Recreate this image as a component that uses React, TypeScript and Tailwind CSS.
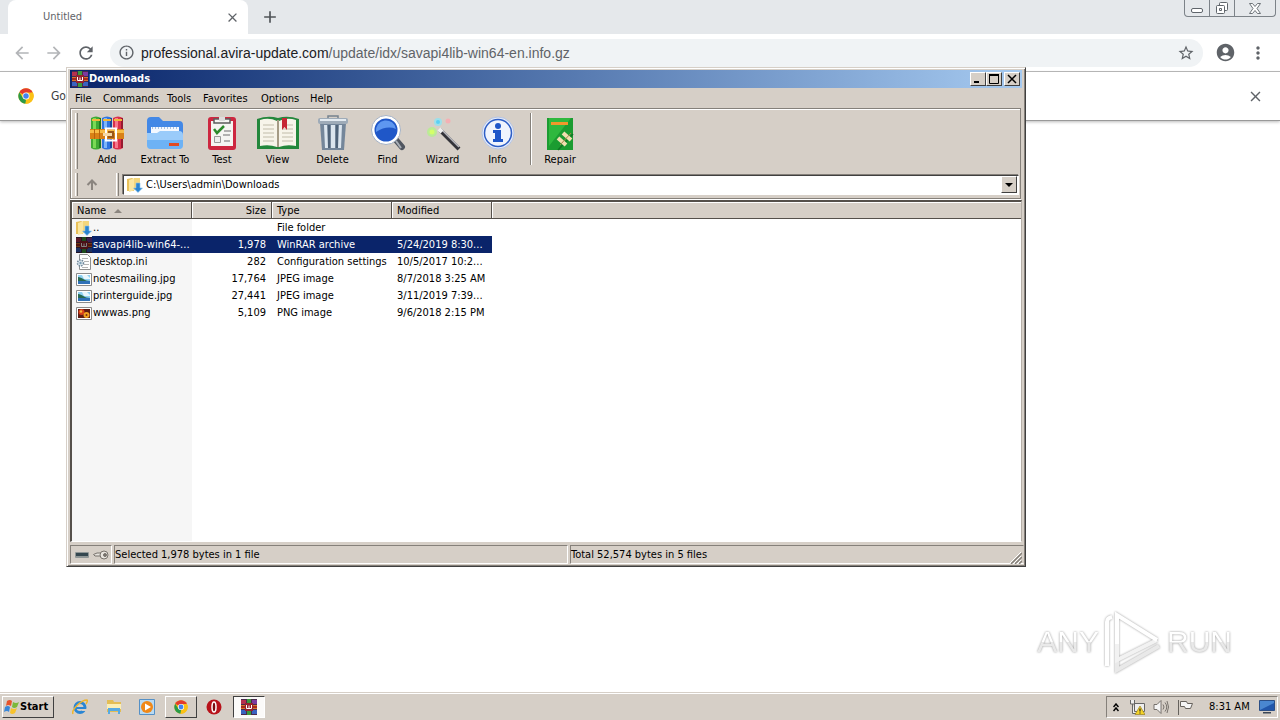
import type { ReactNode } from 'react';
import {
  MdAccountCircle, MdAdd, MdArrowBack, MdArrowForward, MdClose, MdInfoOutline, MdMoreVert, MdRefresh, MdStarBorder,
} from 'react-icons/md';

function RarIcon({ className = 'size-4' }: { className?: string }) {
  return (
    <svg viewBox="0 0 16 16" className={className} aria-hidden="true">
      <rect width="16" height="16" fill="#4a2a4c" />
      <path fill="#b5304e" d="M0 1h5v4H0z" /><path fill="#3c9a3c" d="M6 0h4v5H6z" /><path fill="#7c3a9e" d="M11 1h5v4h-5z" />
      <path fill="#3a62c0" d="M0 11h5v4H0z" /><path fill="#3c9a3c" d="M6 11h4v5H6z" /><path fill="#3a62c0" d="M11 11h5v4h-5z" />
      <path fill="#a8281e" d="M0 6h16v4H0z" /><path fill="#d7762c" d="M0 6h16v1H0zM0 9h16v1H0z" />
      <path fill="#96222e" d="M4 4h8v8H4z" />
      <path d="M5.500 6v3.500h5V6M8 6.500v3" stroke="#fff" fill="none" />
    </svg>
  );
}

function FolderIcon() {
  return (
    <svg viewBox="0 0 16 16" className="size-4 shrink-0" aria-hidden="true">
      <path fill="#e9c15a" d="M0 2l5-1 2 1v12H0z" /><path fill="#fae6a0" d="M2 3l6-2v12l-6 2z" />
      <path fill="#f3d67c" d="M7 1h6v12H7z" />
      <path fill="#2a84cf" stroke="#8cc4ee" strokeWidth=".6" d="M9 6h4v5h2.500L11 15.500 6.500 11H9z" />
    </svg>
  );
}

function IniIcon() {
  return (
    <svg viewBox="0 0 16 16" className="size-4 shrink-0" aria-hidden="true">
      <path fill="#fff" stroke="#8e8e8e" d="M3.500.5h8l3 3v12h-11z" /><path stroke="#b5b5b5" d="M6 4.500h6M8 7.500h5M8 10.500h5M6 13.500h6" />
      <circle cx="4.500" cy="9" r="3" fill="#dfe8ee" stroke="#70889a" strokeWidth="1.500" strokeDasharray="1.500 1" />
      <circle cx="4.500" cy="9" r="1.200" fill="#7da0b6" />
    </svg>
  );
}

function JpgIcon() {
  return (
    <svg viewBox="0 0 16 16" className="size-4 shrink-0" aria-hidden="true">
      <path fill="#fff" stroke="#8a8a8a" d="M.5 2.500h15v12H.5z" /><path fill="#8fd0f2" d="M2 4h12v9H2z" />
      <path fill="#e9f6fc" d="M6 4h5l3 3v1H8z" /><path fill="#27694f" d="M2 6c4 0 6 4 12 4v1H2z" /><path fill="#2f71b8" d="M2 10h12v3H2z" />
    </svg>
  );
}

function PngIcon() {
  return (
    <svg viewBox="0 0 16 16" className="size-4 shrink-0" aria-hidden="true">
      <path fill="#fff" stroke="#8a8a8a" d="M.5 2.500h15v12H.5z" /><path fill="#5e1b12" d="M2 4h12v9H2z" />
      <circle cx="5.500" cy="7" r="3" fill="#d9401b" /><circle cx="10.500" cy="10" r="3" fill="#f0a321" /><circle cx="5" cy="6.500" r="1.200" fill="#f6bc3a" />
      <circle cx="10.500" cy="10" r="1" fill="#7a2a12" />
    </svg>
  );
}

function ChromeIcon({ className = 'size-4' }: { className?: string }) {
  return (
    <svg viewBox="0 0 48 48" className={className} aria-hidden="true">
      <circle cx="24" cy="24" r="23" fill="#fbc116" />
      <path fill="#e33b2e" d="M24 24 4.100 12.500a23 23 0 0 1 39.800 0z" />
      <path fill="#2a9a48" d="M4.100 12.500 14.500 29.500 24 35l-2 12A23 23 0 0 1 4.100 12.500z" />
      <path fill="#fbc116" d="M24 13.500h20.500A23 23 0 0 1 22.500 47L33 29z" />
      <circle cx="24" cy="24" r="10.500" fill="#fff" /><circle cx="24" cy="24" r="8.300" fill="#4384f0" />
    </svg>
  );
}

function AddIcon() {
  const books = [[2, '#3faa35', '#7ada56', '#1f7a20'], [13, '#2f74e0', '#7db5fa', '#1a489e'], [24, '#d9304a', '#f7788c', '#981a30']] as const;
  return (
    <svg viewBox="0 0 36 36" className="size-9" aria-hidden="true">
      {books.map(([x, main, light, dark]) => (
        <g key={x}>
          <path fill={main} d={`M${x} 3q5-3 10 0v30q-5 3-10 0z`} />
          <path fill={light} d={`M${x + 2} 3h3v30h-3z`} /><path fill={dark} d={`M${x + 8} 3h2v30h-2z`} />
          <path fill="#f3b63a" d={`M${x + 1} 4h8v2h-8z`} />
        </g>
      ))}
      <path fill="#d98116" d="M1 14h34v10H1z" /><path fill="#f7bc46" d="M1 15h34v3H1z" />
      <path fill="#b5640e" d="M5 14h1v10H5zM10 14h1v10h-1z" />
      <path fill="none" stroke="#fff" strokeWidth="2" d="M17 13.500h10v12H17z" /><path fill="#9c5717" d="M19 16h6v7h-6z" />
      <path fill="#f4d9a8" d="M14 18h9v3h-9z" />
    </svg>
  );
}

function ExtractIcon() {
  return (
    <svg viewBox="0 0 38 36" className="h-9 w-[38px]" aria-hidden="true">
      <path fill="#4388e6" d="M1 6q0-4 4-4h8l4 4h16q4 0 4 4v18H1z" />
      <path fill="#f4f8ff" d="M5 12h28v10H5z" /><path stroke="#a8c0e0" strokeDasharray="1 2" strokeWidth="2" d="M6 13h26" />
      <path fill="#9acbfa" d="M1 18h10l3-2h19q4 0 4 4v10q0 4-4 4H5q-4 0-4-4z" /><path fill="#6db2f5" d="M1 25h36v5q0 4-4 4H5q-4 0-4-4z" />
      <path fill="#e04a22" d="M23 28h10v3H23z" />
    </svg>
  );
}

function TestIcon() {
  return (
    <svg viewBox="0 0 30 36" className="h-9 w-[30px]" aria-hidden="true">
      <rect x="1" y="2" width="28" height="33" rx="3" fill="#cd2740" /><path fill="#f5f5f2" d="M4 6h22v25H4z" />
      <path fill="#f5f5f2" stroke="#5c5c5c" strokeWidth="1.500" d="M7 4h16v4H7z" /><path fill="#ddd" d="M12 2h6v4h-6z" />
      <path fill="none" stroke="#2c8a2c" strokeWidth="2.500" d="m7 14 3 4 7-7" /><path stroke="#9a9a9a" strokeWidth="1.500" d="M17 16h7M16 20h7M17 26h6" />
      <path fill="#eee" stroke="#999" d="M7.500 21.500h6v6h-6z" />
    </svg>
  );
}

function ViewIcon() {
  return (
    <svg viewBox="0 0 42 36" className="h-9 w-[42px]" aria-hidden="true">
      <path fill="#23873c" d="M0 4q11-4 21-1 10-3 21 1v30H0z" /><path fill="#f7f4ea" d="M3 5q9-3 17 1v26q-8-3-17-1zM39 5q-9-3-17 1v26q8-3 17-1z" />
      <path stroke="#c2bba9" strokeWidth="1.200" d="M6 10h11M6 14h11M6 18h11M6 22h11M6 26h11M25 10h11M25 14h11M25 18h11M25 22h11M25 26h11" />
      <path stroke="#a59b86" strokeWidth="2" d="M21 5v27" /><path fill="#c62634" d="M25 3h5v12l-2.500-3-2.500 3z" />
    </svg>
  );
}

function DeleteIcon() {
  return (
    <svg viewBox="0 0 32 36" className="h-9 w-8" aria-hidden="true">
      <path fill="#74869a" d="M3 8h26l-2 27H5z" /><path fill="#dbe5ee" d="M7 10h3l1 23H8zM14 10h4v23h-4zM22 10h3l-1 23h-3z" />
      <path fill="#4e6278" d="M11 10h2v23h-2zM19 10h2v23h-2z" /><rect x="1" y="3" width="30" height="6" rx="2" fill="#9eabb8" /><path fill="#e4ebf1" d="M3 4h26v2H3z" />
      <path fill="none" stroke="#75828e" strokeWidth="1.500" d="M11 3V1h10v2" />
    </svg>
  );
}

function FindIcon() {
  return (
    <svg viewBox="0 0 36 36" className="size-9" aria-hidden="true">
      <path stroke="#505660" strokeWidth="6" strokeLinecap="round" d="m26 25 6 7" /><path stroke="#aab0b8" strokeWidth="2" d="m26 26 5 7" />
      <circle cx="16" cy="15" r="13" fill="#1f57c8" stroke="#fff" strokeWidth="3" /><circle cx="16" cy="15" r="14.500" fill="none" stroke="#a4b2c6" />
      <path fill="#5e97f0" d="M6 17a10 10 0 0 1 20-3q-9-4-20 3z" />
    </svg>
  );
}

function WizardIcon() {
  return (
    <svg viewBox="0 0 36 36" className="size-9" aria-hidden="true">
      <path stroke="#34343a" strokeWidth="4" d="m15 15 19 19" /><path stroke="#b9b9bf" strokeWidth="1.500" d="m16 14 18 18" />
      <path stroke="#eee" strokeWidth="4" d="m14 14 3 3" />
      <circle cx="7" cy="17" r="5" fill="#b4f08c" opacity=".8" /><circle cx="7" cy="17" r="2.500" fill="#d4ff6a" />
      <circle cx="13" cy="7" r="4" fill="#8fe4f4" opacity=".8" /><circle cx="13" cy="7" r="2" fill="#5ad0f5" />
      <circle cx="23" cy="6" r="2.500" fill="#f4b0b4" />
    </svg>
  );
}

function InfoIcon() {
  return (
    <svg viewBox="0 0 36 36" className="size-9" aria-hidden="true">
      <circle cx="18" cy="18" r="16" fill="#e6ecfa" stroke="#b4c4e4" /><circle cx="18" cy="18" r="13.500" fill="#f0f4fd" stroke="#2d5ec6" strokeWidth="1.500" />
      <circle cx="18" cy="11" r="3" fill="#1e56c8" /><path fill="#1e56c8" d="M13 15h8v9h2v3H13v-3h2v-6h-2z" />
    </svg>
  );
}

function RepairIcon() {
  return (
    <svg viewBox="0 0 30 36" className="h-9 w-[30px]" aria-hidden="true">
      <path fill="#1b9c31" d="M2 3h26v32H2z" /><path fill="#2fb83e" d="M4 3h22L4 31z" /><path fill="#f0982b" d="M6 7h17v3H6z" />
      <path stroke="#107524" strokeWidth="1.500" d="m13 35 15-16" />
      <path stroke="#f1dfb0" strokeWidth="4" d="m13 23 8 7M18 18l8 7" /><path stroke="#a4854c" d="m15 30 11-12" />
    </svg>
  );
}

const menus = [['File', 'w-7'], ['Commands', 'w-16'], ['Tools', 'w-9'], ['Favorites', 'w-[58px]'], ['Options', 'w-[49px]'], ['Help', 'w-8']];

const tools: { label: string; width: string; icon: ReactNode }[] = [
  { label: 'Add', width: 'w-[58px]', icon: <AddIcon /> },
  { label: 'Extract To', width: 'w-[58px]', icon: <ExtractIcon /> },
  { label: 'Test', width: 'w-14', icon: <TestIcon /> },
  { label: 'View', width: 'w-[55px]', icon: <ViewIcon /> },
  { label: 'Delete', width: 'w-[55px]', icon: <DeleteIcon /> },
  { label: 'Find', width: 'w-[55px]', icon: <FindIcon /> },
  { label: 'Wizard', width: 'w-[55px]', icon: <WizardIcon /> },
  { label: 'Info', width: 'w-[55px]', icon: <InfoIcon /> },
];

const files: { name: string; size: string; type: string; date: string; icon: ReactNode; selected?: boolean }[] = [
  { name: '..', size: '', type: 'File folder', date: '', icon: <FolderIcon /> },
  { name: 'savapi4lib-win64-...', size: '1,978', type: 'WinRAR archive', date: '5/24/2019 8:30...', icon: <RarIcon className="size-4 shrink-0 brightness-50" />, selected: true },
  { name: 'desktop.ini', size: '282', type: 'Configuration settings', date: '10/5/2017 10:2...', icon: <IniIcon /> },
  { name: 'notesmailing.jpg', size: '17,764', type: 'JPEG image', date: '8/7/2018 3:25 AM', icon: <JpgIcon /> },
  { name: 'printerguide.jpg', size: '27,441', type: 'JPEG image', date: '3/11/2019 7:39...', icon: <JpgIcon /> },
  { name: 'wwwas.png', size: '5,109', type: 'PNG image', date: '9/6/2018 2:15 PM', icon: <PngIcon /> },
];

const raised = 'border border-t-white border-l-white border-b-[#404040] border-r-[#404040] bg-[#d6cfc7]';

function ToolButton({ label, width, icon }: { label: string; width: string; icon: ReactNode }) {
  return (
    <button className={`flex flex-col items-center ${width}`}>
      {icon}
      <span className="mt-px leading-4 whitespace-nowrap">{label}</span>
    </button>
  );
}

function Grip() {
  return <span className="w-[3px] self-stretch border-r border-l border-r-[#85807a] border-l-white" />;
}

function CaptionButton({ label, children }: { label: string; children: ReactNode }) {
  return (
    <button aria-label={label} className={`flex h-[14px] w-4 items-center justify-center ${raised}`}>
      <svg viewBox="0 0 12 12" className="size-3 shrink-0" fill="none" stroke="#000">{children}</svg>
    </button>
  );
}

function ArchiveWindow() {
  const head = 'h-[17px] border-r border-b border-[#55504b] p-0 pt-px leading-[15px] font-normal shadow-[inset_1px_1px_0_#fff]';
  return (
    <section aria-label="Downloads" className="absolute top-[67px] left-[66px] flex h-[500px] w-[960px] flex-col border border-t-[#d6cfc7] border-r-[#404040] border-b-[#404040] border-l-[#d6cfc7] bg-[#d6cfc7] p-0.5 text-[11px] text-black shadow-[inset_1px_1px_0_#fff,inset_-1px_-1px_0_#85807a]">
      <header className="mx-px flex h-[18px] shrink-0 items-center bg-linear-to-r from-[#0a246a] to-[#a6caf0] px-0.5">
        <RarIcon />
        <h1 className="ml-px flex-1 pt-px font-bold text-white">Downloads</h1>
        <CaptionButton label="Minimize"><path d="M2 9h5" strokeWidth="2" /></CaptionButton>
        <CaptionButton label="Maximize"><path d="M1.500 2v8.500h9V2" /><path d="M1 2h10" strokeWidth="2" /></CaptionButton>
        <span className="w-0.5" />
        <CaptionButton label="Close"><path d="m2 2 8 8M10 2l-8 8" strokeWidth="1.500" /></CaptionButton>
      </header>

      <nav className="flex h-5 shrink-0 items-center pt-0.5 pl-1.5">
        {menus.map(([label, width]) => <button key={label} className={`text-left ${width}`}>{label}</button>)}
      </nav>

      <div className="mr-0.5 ml-px flex h-[91px] shrink-0 flex-col border border-[#85807a] shadow-[inset_1px_1px_0_#fff,0_1px_0_#fff]">
        <div className="flex h-16 py-1 pl-1">
          <Grip />
          <div className="flex h-14 items-start pt-0.5">
            {tools.map((t) => <ToolButton key={t.label} {...t} />)}
          </div>
          <span className="ml-[5px] h-[52px] w-0.5 border-r border-l border-r-white border-l-[#85807a]" />
          <div className="pt-0.5">
            <ToolButton label="Repair" width="w-14" icon={<RepairIcon />} />
          </div>
        </div>
        <div className="flex h-[23px] items-center pl-1">
          <Grip />
          <button aria-label="Up one level" className="flex w-7 justify-center">
            <svg viewBox="0 0 12 12" className="size-3" fill="none" stroke="#8b857f" strokeWidth="2"><path d="M6 11V2M1.500 6 6 1.500 10.500 6" /></svg>
          </button>
          <span className="w-2.5" />
          <Grip />
          <div className="mr-px ml-1 flex h-5 flex-1 items-center border border-t-[#404040] border-r-white border-b-white border-l-[#404040] bg-white pl-[3px] shadow-[-1px_-1px_0_#85807a]">
            <FolderIcon />
            <input aria-label="Path" defaultValue="C:\Users\admin\Downloads" className="ml-[3px] min-w-0 flex-1 pt-px outline-none" />
            <button aria-label="Show recent folders" className={`mr-px flex h-[17px] w-4 items-center justify-center ${raised}`}>
              <svg viewBox="0 0 8 4" className="h-1 w-2"><path d="M0 0h8L4 4z" /></svg>
            </button>
          </div>
        </div>
      </div>

      <div className="mx-px mt-px flex-1 overflow-hidden border-t-2 border-r border-b border-l-2 border-t-[#55504b] border-r-[#b5afa8] border-b-white border-l-[#55504b] bg-[linear-gradient(to_right,#f6f6f6_120px,#fff_120px)]">
        <table className="w-full table-fixed border-separate border-spacing-0">
          <colgroup><col className="w-[120px]" /><col className="w-20" /><col className="w-[120px]" /><col className="w-[100px]" /><col /></colgroup>
          <thead className="bg-[#d6cfc7]">
            <tr>
              <th className={`${head} pl-[5px] text-left`}>
                <span className="flex items-center gap-2">Name<svg viewBox="0 0 8 4" className="h-1 w-2"><path fill="#8b857f" d="M0 4h8L4 0z" /></svg></span>
              </th>
              <th className={`${head} pr-[5px] text-right`}>Size</th>
              <th className={`${head} pl-[5px] text-left`}>Type</th>
              <th className={`${head} pl-[5px] text-left`}>Modified</th>
              <td className="border-b border-[#55504b] shadow-[inset_1px_1px_0_#fff]" />
            </tr>
          </thead>
          <tbody>
            {files.map((f) => {
              const tone = f.selected ? 'bg-[#0a246a] text-white' : '';
              return (
                <tr key={f.name} className="h-[17px] leading-[17px] whitespace-nowrap">
                  <td className="p-0">
                    <div className="flex h-[17px] items-center pl-1">
                      {f.icon}
                      <span className={`h-[17px] flex-1 pl-px ${tone}`}>{f.name}</span>
                    </div>
                  </td>
                  <td className={`p-0 pr-1.5 text-right ${tone}`}>{f.size}</td>
                  <td className={`p-0 pl-[5px] ${tone}`}>{f.type}</td>
                  <td className={`p-0 pl-[5px] ${tone}`}>{f.date}</td>
                  <td className="p-0" />
                </tr>
              );
            })}
          </tbody>
        </table>
      </div>

      <footer className="mx-px mt-[3px] flex h-[19px] shrink-0 gap-0.5">
        <div className="flex w-[42px] items-center gap-1 border border-t-[#85807a] border-r-white border-b-white border-l-[#85807a] pl-1">
          <svg viewBox="0 0 14 6" className="h-1.5 w-3.5"><rect width="14" height="6" rx="1" fill="#8f9696" /><path fill="#35474f" d="M1 1h12v3H1z" /></svg>
          <svg viewBox="0 0 16 10" className="h-2.5 w-4" fill="#e8e4de" stroke="#77726c"><path d="M.5 4.500 4 3h4v3H2z" /><circle cx="11" cy="5" r="4" /><circle cx="12" cy="5" r="1.500" fill="#77726c" /></svg>
        </div>
        <p className="flex-1 border border-t-[#85807a] border-r-white border-b-white border-l-[#85807a] leading-[17px]">Selected 1,978 bytes in 1 file</p>
        <p className="flex-1 border border-t-[#85807a] border-r-transparent border-b-white border-l-[#85807a] leading-[17px]">Total 52,574 bytes in 5 files</p>
        <svg viewBox="0 0 12 12" className="-ml-4 size-3 self-end" fill="none" aria-hidden="true">
          <path stroke="#fff" d="M0 11 11 0M4 11l7-7M8 11l3-3" /><path stroke="#85807a" strokeWidth="1.500" d="M1 12 12 1M5 12l7-7M9 12l3-3" />
        </svg>
      </footer>
    </section>
  );
}

function Browser() {
  return (
    <>
      <div className="flex h-[34px] shrink-0 items-start bg-[#e5e8eb] pl-2">
        <div className="flex h-[34px] w-60 items-center rounded-t-lg bg-white pr-2 pl-[35px] text-[11px] text-[#5f6368]">
          <span className="flex-1">Untitled</span>
          <button aria-label="Close tab"><MdClose size={15} /></button>
        </div>
        <button aria-label="New tab" className="ml-3 flex h-[34px] items-center text-[#505458]"><MdAdd size={20} /></button>
        <span className="flex-1" />
        <div className="mr-1 flex h-[17px] rounded-b border border-t-0 border-[#7c8288] text-[#5f656b]">
          <button aria-label="Minimize" className="flex w-[25px] items-end justify-center border-r border-[#7c8288] pb-[3px]">
            <svg viewBox="0 0 12 5" className="h-[5px] w-3" fill="#fff" stroke="currentColor"><rect x=".5" y=".5" width="11" height="4" rx="1.500" /></svg>
          </button>
          <button aria-label="Restore" className="flex w-[25px] items-center justify-center border-r border-[#7c8288]">
            <svg viewBox="0 0 14 14" className="size-3.5" fill="#fff" stroke="currentColor"><rect x="4.500" y="1.500" width="8" height="8" rx="1" /><rect x="1.500" y="4.500" width="8" height="8" rx="1" /><path d="M4.500 7.500h2v2h-2z" /></svg>
          </button>
          <button aria-label="Close" className="flex w-10 items-center justify-center">
            <svg viewBox="0 0 12 11" className="h-[11px] w-3" fill="#fff" stroke="currentColor" strokeWidth=".9"><path d="M.5.5h3L6 3.500 8.500.5h3l-3.500 5 3.500 5h-3L6 7.500l-2.500 3h-3l3.500-5z" /></svg>
          </button>
        </div>
      </div>
      <div className="flex h-[38px] shrink-0 items-center border-b border-[#b4b4b4] bg-white px-3 text-[#5f6368]">
        <button aria-label="Back" className="w-8 text-[#b3b5b8]"><MdArrowBack size={20} /></button>
        <button aria-label="Forward" className="w-8 text-[#b3b5b8]"><MdArrowForward size={20} /></button>
        <button aria-label="Reload" className="w-[34px]"><MdRefresh size={20} /></button>
        <div className="flex h-7 flex-1 items-center rounded-full bg-[#f0f3f5] px-2">
          <MdInfoOutline size={17} />
          <div className="ml-1.5 flex-1 font-['Liberation_Sans',sans-serif] text-[14px] leading-5 whitespace-nowrap">
            <span className="text-[#202124]">professional.avira-update.com</span>/update/idx/savapi4lib-win64-en.info.gz
          </div>
          <button aria-label="Bookmark this page"><MdStarBorder size={18} /></button>
        </div>
        <button aria-label="Profile" className="ml-3"><MdAccountCircle size={21} /></button>
        <button aria-label="Menu" className="ml-3"><MdMoreVert size={20} /></button>
      </div>
      <div className="flex h-[49px] shrink-0 items-center border-b border-[#999] bg-white pr-4 pl-[18px] text-xs text-[#3c4043] shadow-[0_1px_3px_#bbb]">
        <ChromeIcon />
        <span className="ml-[17px] flex-1">Go</span>
        <button aria-label="Dismiss" className="text-[#5f6368]"><MdClose size={17} /></button>
      </div>
    </>
  );
}

function Watermark() {
  const word = "bg-linear-to-b from-white from-50% to-[#e9e9e9] to-50% bg-clip-text font-['Liberation_Sans',sans-serif] text-[30px] leading-10 text-transparent drop-shadow-[0_0_1px_#999]";
  return (
    <div className="absolute right-12 bottom-[46px] flex items-center">
      <span className={word}>ANY</span>
      <svg viewBox="0 0 60 64" className="mx-1 h-16 w-[60px] drop-shadow-[0_0_1px_#999]" fill="none" stroke="#fff" strokeWidth="4" aria-hidden="true">
        <path stroke="#e9e9e9" d="M14 50v10l42-24" /><path stroke="#f2f2f2" d="M14 34v16l40-20" /><path d="M14 34V5l40 25M4 56V12q0-4 5-5" />
      </svg>
      <span className={word}>RUN</span>
    </div>
  );
}

function Taskbar() {
  return (
    <footer className="flex h-7 shrink-0 items-center border-t border-[#d6cfc7] bg-[#d6cfc7] px-0.5 text-[11px] text-black shadow-[inset_0_1px_0_#fff]">
      <button className={`mt-px flex h-[22px] w-[52px] items-center pl-px font-bold ${raised}`}>
        <svg viewBox="0 0 16 16" className="size-4 shrink-0" aria-hidden="true">
          <path fill="#e8542c" d="M3 2q3-2 5 0L7 7Q4 5 2 7z" /><path fill="#7cb83a" d="M9 3q3 2 6 0l-2 5q-3 2-5 0z" />
          <path fill="#3a87d8" d="M1 8q3-2 5 0l-1 5Q3 11 0 13z" /><path fill="#f7c22c" d="M7 9q3 2 6 0l-2 5q-3 2-5 0z" />
        </svg>
        Start
      </button>
      <div className="ml-[18px] flex w-[83px] items-center justify-between">
        <button aria-label="Internet Explorer">
          <svg viewBox="0 0 16 16" className="size-4" fill="none"><circle cx="8" cy="8.500" r="5" stroke="#2a86d4" strokeWidth="3" /><path stroke="#2a86d4" strokeWidth="2" d="M4 9h9" /><path fill="#d6cfc7" d="M10 10h6v2h-6z" /><path stroke="#efb52c" strokeWidth="1.500" d="M1 15C-1 11 9 1 15 1q1 1-1 4" /></svg>
        </button>
        <button aria-label="File Explorer">
          <svg viewBox="0 0 16 16" className="size-4"><path fill="#e3bd55" d="M1 1h6l1 2h7v10H1z" /><path fill="#fbeeb4" d="M1 5h14v5H1z" /><path fill="#57aae2" d="M2 9h12v6h-2v-3H4v3H2z" /></svg>
        </button>
        <button aria-label="Media Player">
          <svg viewBox="0 0 16 16" className="size-4"><path fill="#b9daf2" stroke="#5590c6" d="M.5.5h15v15H.5z" /><circle cx="8" cy="8" r="6" fill="#f08818" /><path fill="#fff" d="m6 4.500 6 3.500-6 3.500z" /></svg>
        </button>
      </div>
      <button aria-label="Google Chrome" className={`mt-px ml-2.5 flex h-[22px] w-8 items-center justify-center ${raised}`}><ChromeIcon className="size-[14px]" /></button>
      <button aria-label="Opera" className="ml-[9px]">
        <svg viewBox="0 0 16 16" className="size-4"><circle cx="8" cy="8" r="7.500" fill="#b8121a" /><ellipse cx="8" cy="8" rx="2" ry="5" fill="#7c0c10" stroke="#fff" strokeWidth="1.500" /></svg>
      </button>
      <button aria-label="WinRAR" className="mt-px ml-[11px] flex h-[22px] w-8 items-center justify-center border border-t-[#404040] border-r-white border-b-white border-l-[#404040] bg-[#fbfaf9]"><RarIcon /></button>
      <span className="flex-1" />
      <div className="mt-px flex h-[22px] items-center border border-t-[#85807a] border-r-white border-b-white border-l-[#85807a] pr-0.5 pl-1.5">
        <button aria-label="Show hidden icons"><svg viewBox="0 0 6 9" className="h-[9px] w-1.5" fill="none" stroke="#000" strokeWidth="1.500"><path d="m.5 4 2.500-3 2.500 3M.5 8 3 5l2.500 3" /></svg></button>
        <svg viewBox="0 0 16 16" className="ml-2.5 size-4" aria-hidden="true"><path fill="#eee" stroke="#666" d="M5.500 4.500h10v8h-10zM1.500 1v4h4V1M3.500 5v9.500h4" /><path fill="#f5d327" stroke="#8b7414" strokeWidth=".6" d="m11 7 5 8.500H6z" /><path stroke="#222" strokeWidth="1.200" d="M11 9.500v3M11 13.500v1" /></svg>
        <svg viewBox="0 0 16 16" className="ml-2 size-4" fill="none" stroke="#76716c" aria-hidden="true"><path fill="#f5f5f5" d="M1 5.500h3l4-4v13l-4-4H1z" /><path d="M10 5.500q2 2.500 0 5M12 3.500q3.500 4.500 0 9M14 2q3 6 0 12" /></svg>
        <svg viewBox="0 0 16 16" className="ml-2 size-4" fill="#f5f5f5" stroke="#66625d" aria-hidden="true"><path d="M1.500 1v15M3.500 2.500h6l1 2h5l-2 5h-5l-1-2h-4z" /></svg>
        <time className="ml-4 w-[42px] whitespace-nowrap">8:31 AM</time>
        <button aria-label="Show desktop" className="ml-2"><svg viewBox="0 0 16 14" className="h-3.5 w-4"><path fill="#4a87d0" stroke="#2c4f86" d="M.5.5h15v10H.5z" /><path fill="#2257ab" d="M1 10 15 3v7z" /><path fill="#3b4656" d="M4 12h8v1.500H4z" /></svg></button>
      </div>
    </footer>
  );
}

export default function App() {
  return (
    <main className="relative flex h-screen flex-col overflow-hidden bg-white font-['DejaVu_Sans_Condensed','DejaVu_Sans',sans-serif]">
      <Browser />
      <div className="flex-1" />
      <Watermark />
      <ArchiveWindow />
      <Taskbar />
    </main>
  );
}
